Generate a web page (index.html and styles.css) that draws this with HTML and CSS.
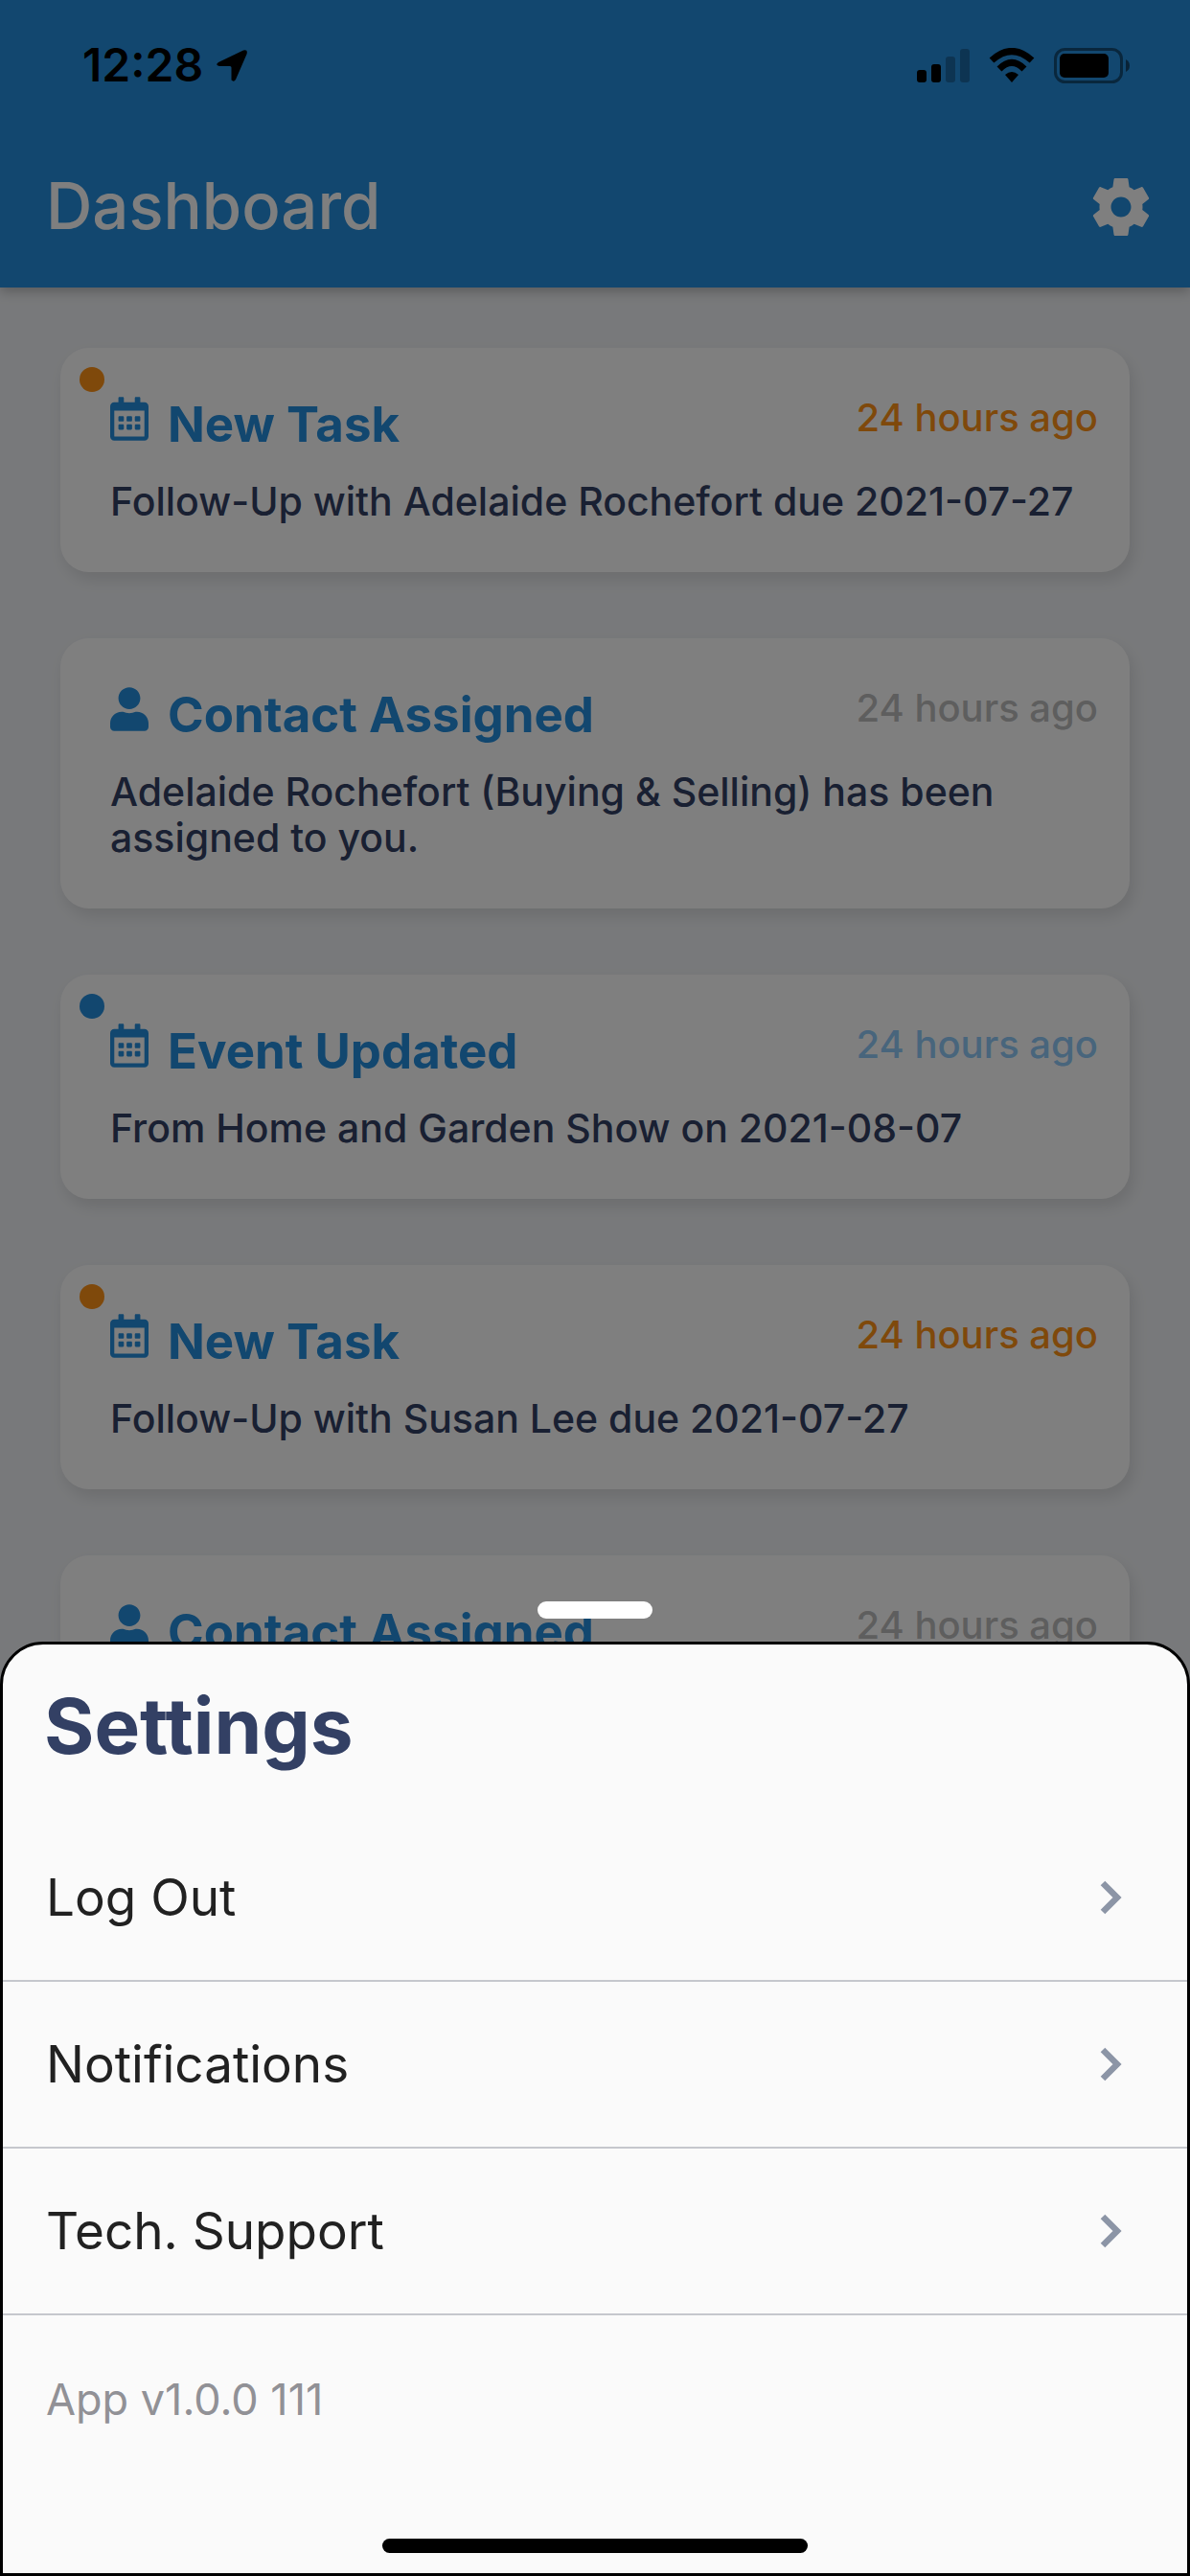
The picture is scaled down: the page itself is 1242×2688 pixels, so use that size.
FILE: index.html
```html
<!DOCTYPE html>
<html lang="en">
<head>
<meta charset="utf-8">
<meta name="viewport" content="width=device-width, initial-scale=1">
<title>Dashboard</title>
<link rel="stylesheet" href="styles.css">
</head>
<body>
<svg class="sprite" aria-hidden="true">
  <symbol id="calendar" viewBox="0 0 448 512"><path d="M148 288h-40c-6.600 0-12-5.400-12-12v-40c0-6.600 5.400-12 12-12h40c6.600 0 12 5.400 12 12v40c0 6.600-5.400 12-12 12zm108-12v-40c0-6.600-5.400-12-12-12h-40c-6.600 0-12 5.400-12 12v40c0 6.600 5.400 12 12 12h40c6.600 0 12-5.400 12-12zm96 0v-40c0-6.600-5.400-12-12-12h-40c-6.600 0-12 5.400-12 12v40c0 6.600 5.400 12 12 12h40c6.600 0 12-5.400 12-12zm-96 96v-40c0-6.600-5.400-12-12-12h-40c-6.600 0-12 5.400-12 12v40c0 6.600 5.400 12 12 12h40c6.600 0 12-5.400 12-12zm-96 0v-40c0-6.600-5.400-12-12-12h-40c-6.600 0-12 5.400-12 12v40c0 6.600 5.400 12 12 12h40c6.600 0 12-5.400 12-12zm192 0v-40c0-6.600-5.400-12-12-12h-40c-6.600 0-12 5.400-12 12v40c0 6.600 5.400 12 12 12h40c6.600 0 12-5.400 12-12zm96-260v352c0 26.500-21.500 48-48 48H48c-26.500 0-48-21.500-48-48V112c0-26.500 21.500-48 48-48h48V12c0-6.600 5.400-12 12-12h40c6.600 0 12 5.400 12 12v52h128V12c0-6.600 5.400-12 12-12h40c6.600 0 12 5.400 12 12v52h48c26.500 0 48 21.500 48 48zm-48 346V160H48v298c0 3.300 2.700 6 6 6h340c3.300 0 6-2.700 6-6z"/></symbol>
  <symbol id="person" viewBox="0 0 448 512"><path d="M224 256c70.700 0 128-57.300 128-128S294.700 0 224 0 96 57.300 96 128s57.300 128 128 128zm89.600 32h-16.700c-22.200 10.200-46.900 16-72.900 16s-50.600-5.800-72.900-16h-16.700C60.200 288 0 348.200 0 422.400V464c0 26.500 21.500 48 48 48h352c26.500 0 48-21.500 48-48v-41.600c0-74.200-60.200-134.400-134.400-134.400z"/></symbol>
  <symbol id="chevron" viewBox="0 0 24 38"><path d="M3 4l15 15L3 34" fill="none" stroke="currentColor" stroke-width="6.500"/></symbol>
</svg>

<div class="screen">
  <div class="dashboard">
    <header class="app-bar">
      <div class="status-bar">
        <div class="status-group">
          <span class="clock">12:28</span>
          <svg class="location" viewBox="0 0 32 33" aria-hidden="true"><path d="M2 13L28 0.500Q33-1 31.500 4.500L20 31Q18 34 15.500 31.500V18.500Q15.500 17 14 17H3Q-2 16 2 13z"/></svg>
        </div>
        <div class="status-group status-icons">
          <svg class="signal" viewBox="0 0 55 35" aria-hidden="true"><rect y="22" width="10" height="13" rx="3"/><rect x="15" y="16" width="10" height="19" rx="3"/><g opacity=".25"><rect x="30" y="8" width="10" height="27" rx="3"/><rect x="45" width="10" height="35" rx="3"/></g></svg>
          <svg class="wifi" viewBox="0 0 48 36" aria-hidden="true"><g fill="none" stroke="#000" stroke-width="7"><path d="M3 13Q24-6 45 13"/><path d="M11 22Q24 9 37 22"/></g><path d="M17 28Q24 22 31 28L24 36z"/></svg>
          <svg class="battery" viewBox="0 0 80 37" aria-hidden="true"><rect x="1.500" y="1.500" width="69" height="34" rx="10" fill="none" stroke="#000" stroke-width="3" opacity=".45"/><rect x="6" y="6" width="51" height="25" rx="5"/><path d="M75 12Q79 14 79 18.500T75 25z" opacity=".5"/></svg>
        </div>
      </div>
      <div class="title-bar">
        <h1 class="page-title">Dashboard</h1>
        <button class="icon-button" type="button" aria-label="Settings">
          <svg class="gear" viewBox="0 0 24 24" aria-hidden="true"><path d="M19.430 12.980c.040-.320.070-.640.070-.980s-.030-.660-.070-.980l2.110-1.650c.190-.150.240-.420.120-.640l-2-3.460c-.120-.220-.390-.300-.610-.220l-2.490 1c-.520-.400-1.080-.730-1.690-.980l-.380-2.650C14.460 2.180 14.250 2 14 2h-4c-.250 0-.460.180-.490.420l-.380 2.650c-.610.250-1.170.590-1.690.980l-2.490-1c-.230-.090-.490 0-.610.220l-2 3.460c-.130.220-.070.490.120.640l2.110 1.650c-.040.320-.070.650-.070.980s.030.660.070.980l-2.110 1.650c-.190.150-.240.420-.120.640l2 3.460c.120.220.390.300.610.220l2.490-1c.520.400 1.080.730 1.690.980l.380 2.650c.030.240.240.420.490.420h4c.250 0 .460-.180.490-.420l.380-2.650c.610-.250 1.170-.590 1.690-.980l2.490 1c.230.090.490 0 .610-.220l2-3.460c.120-.220.070-.490-.120-.640l-2.110-1.650zM12 15.500c-1.930 0-3.500-1.570-3.500-3.500s1.570-3.500 3.500-3.500 3.500 1.570 3.500 3.500-1.570 3.500-3.500 3.500z"/></svg>
        </button>
      </div>
    </header>

    <main class="feed">
      <article class="card task unread">
        <div class="card-head">
          <svg class="card-icon" aria-hidden="true"><use href="#calendar"/></svg>
          <h2 class="card-title">New Task</h2>
          <time class="card-time">24 hours ago</time>
        </div>
        <p class="card-text">Follow-Up with Adelaide Rochefort due 2021-07-27</p>
      </article>
      <article class="card">
        <div class="card-head">
          <svg class="card-icon" aria-hidden="true"><use href="#person"/></svg>
          <h2 class="card-title">Contact Assigned</h2>
          <time class="card-time">24 hours ago</time>
        </div>
        <p class="card-text">Adelaide Rochefort (Buying &amp; Selling) has been assigned to you.</p>
      </article>
      <article class="card event unread">
        <div class="card-head">
          <svg class="card-icon" aria-hidden="true"><use href="#calendar"/></svg>
          <h2 class="card-title">Event Updated</h2>
          <time class="card-time">24 hours ago</time>
        </div>
        <p class="card-text">From Home and Garden Show on 2021-08-07</p>
      </article>
      <article class="card task unread">
        <div class="card-head">
          <svg class="card-icon" aria-hidden="true"><use href="#calendar"/></svg>
          <h2 class="card-title">New Task</h2>
          <time class="card-time">24 hours ago</time>
        </div>
        <p class="card-text">Follow-Up with Susan Lee due 2021-07-27</p>
      </article>
      <article class="card">
        <div class="card-head">
          <svg class="card-icon" aria-hidden="true"><use href="#person"/></svg>
          <h2 class="card-title">Contact Assigned</h2>
          <time class="card-time">24 hours ago</time>
        </div>
      </article>
    </main>
  </div>

  <div class="overlay">
    <div class="handle"></div>
    <section class="sheet" role="dialog" aria-labelledby="sheet-title">
      <h2 class="sheet-title" id="sheet-title">Settings</h2>
      <nav class="menu">
        <a class="menu-item" href="#logout">Log Out<svg class="chevron" aria-hidden="true"><use href="#chevron"/></svg></a>
        <a class="menu-item" href="#notifications">Notifications<svg class="chevron" aria-hidden="true"><use href="#chevron"/></svg></a>
        <a class="menu-item" href="#support">Tech. Support<svg class="chevron" aria-hidden="true"><use href="#chevron"/></svg></a>
      </nav>
      <p class="version">App v1.0.0 111</p>
      <div class="home-indicator"></div>
    </section>
  </div>
</div>
</body>
</html>
```
FILE: styles.css
```css
* {
  box-sizing: border-box;
}

body {
  margin: 0;
  font-family: Inter, "Liberation Sans", sans-serif;
  color: #334064;
}

h1, h2, p {
  margin: 0;
}

.sprite {
  display: none;
}

/* The dashboard and the sheet share one grid cell, so the sheet lies on top. */
.screen {
  display: grid;
  grid-template: minmax(0, 1fr) / minmax(0, 1fr);
  height: 100vh;
  overflow: hidden;
}

.dashboard,
.overlay {
  grid-area: 1 / 1;
}

.dashboard {
  overflow: hidden;
  background: #f1f3f6;
}

.app-bar {
  position: relative;
  height: 300px;
  background: #248ede;
  box-shadow: 0 4px 12px rgba(0, 0, 0, 0.25);
}

.status-bar {
  display: flex;
  align-items: center;
  justify-content: space-between;
  height: 132px;
  padding: 4px 62px 0 86px;
}

.status-group {
  display: flex;
  align-items: center;
  gap: 14px;
}

.status-icons {
  gap: 20px;
}

.clock {
  font-size: 48px;
  font-weight: 600;
  line-height: 56px;
  color: #000;
}

.location {
  width: 32px;
  height: 33px;
}

.signal {
  width: 55px;
  height: 35px;
}

.wifi {
  width: 48px;
  height: 36px;
}

.battery {
  width: 80px;
  height: 37px;
}

.title-bar {
  display: flex;
  align-items: center;
  justify-content: space-between;
  height: 168px;
  padding: 0 36px 0 48px;
}

.page-title {
  padding-bottom: 2px;
  font-size: 67px;
  font-weight: 500;
  line-height: 80px;
  color: #fff;
}

.icon-button {
  display: flex;
  padding: 0;
  border: 0;
  background: none;
}

.gear {
  width: 72px;
  height: 72px;
  fill: #fff;
}

.feed {
  display: flex;
  flex-direction: column;
  gap: 69px;
  padding: 63px;
}

.card {
  position: relative;
  padding: 48px 33px 50px 52px;
  border-radius: 30px;
  background: #fff;
  box-shadow: 4px 8px 16px rgba(0, 0, 0, 0.1);
}

.unread::before {
  content: "";
  position: absolute;
  top: 20px;
  left: 20px;
  width: 26px;
  height: 26px;
  border-radius: 50%;
  background: var(--accent);
}

.task {
  --accent: #ff9216;
}

.event {
  --accent: #248ede;
}

.card-head {
  display: flex;
  align-items: flex-start;
  gap: 20px;
}

.card-icon {
  width: 40px;
  height: 49px;
  padding-top: 3px;
  fill: #248ede;
}

.card-title {
  flex: 1;
  padding-top: 2px;
  font-size: 51px;
  font-weight: 700;
  line-height: 60px;
  color: #248ede;
}

.card-time {
  padding-top: 1px;
  font-size: 40px;
  font-weight: 500;
  line-height: 48px;
  color: #bdbdbd;
}

.task .card-time {
  color: #ff9216;
}

.event .card-time {
  color: #90caf9;
}

.card-text {
  padding-top: 26px;
  font-size: 41px;
  font-weight: 500;
  line-height: 48px;
}

.overlay {
  z-index: 1;
  display: flex;
  flex-direction: column;
  align-items: center;
  justify-content: flex-end;
  gap: 24px;
  background: rgba(0, 0, 0, 0.5);
}

.handle {
  width: 120px;
  height: 18px;
  border-radius: 9px;
  background: #fff;
}

.sheet {
  width: 100%;
  padding-top: 37px;
  border: 3px solid #000;
  border-radius: 45px 45px 0 0;
  background: #fafafa;
}

.sheet-title {
  padding: 0 43px;
  font-size: 80px;
  font-weight: 700;
  line-height: 96px;
}

.menu {
  padding-top: 45px;
}

.menu-item {
  display: flex;
  align-items: center;
  justify-content: space-between;
  height: 174px;
  padding: 0 67px 0 45px;
  border-bottom: 2px solid #c5c7cd;
  font-size: 53px;
  line-height: 64px;
  color: #212121;
  text-decoration: none;
}

.chevron {
  width: 24px;
  height: 38px;
  color: #8c95a6;
}

.version {
  padding: 60px 45px;
  font-size: 45px;
  line-height: 56px;
  color: #919196;
}

.home-indicator {
  width: 444px;
  height: 15px;
  margin: 57px auto 21px;
  border-radius: 8px;
  background: #000;
}
```
